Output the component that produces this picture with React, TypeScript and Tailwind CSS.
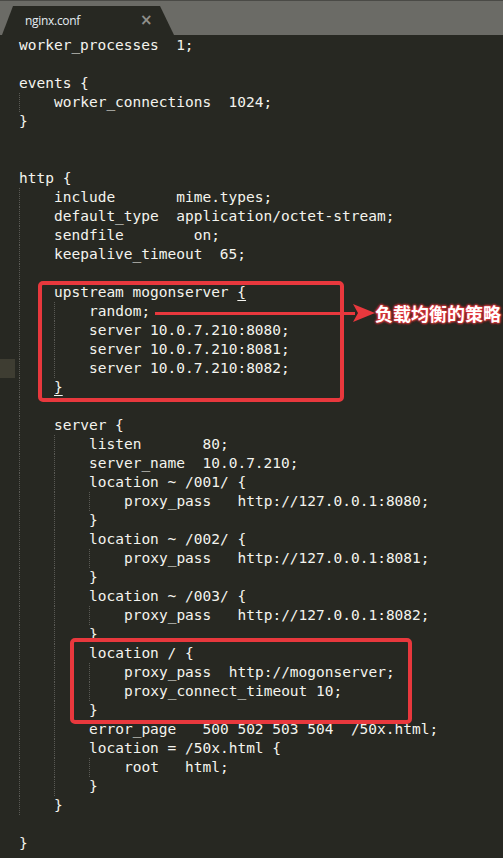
const lines: [number, string][] = [
  [0, "worker_processes  1;"],
  [0, ""],
  [0, "events {"],
  [1, "worker_connections  1024;"],
  [0, "}"],
  [0, ""],
  [0, ""],
  [0, "http {"],
  [1, "include       mime.types;"],
  [1, "default_type  application/octet-stream;"],
  [1, "sendfile        on;"],
  [1, "keepalive_timeout  65;"],
  [1, ""],
  [1, "upstream mogonserver {"],
  [2, "random;"],
  [2, "server 10.0.7.210:8080;"],
  [2, "server 10.0.7.210:8081;"],
  [2, "server 10.0.7.210:8082;"],
  [1, "}"],
  [1, ""],
  [1, "server {"],
  [2, "listen       80;"],
  [2, "server_name  10.0.7.210;"],
  [2, "location ~ /001/ {"],
  [3, "proxy_pass   http://127.0.0.1:8080;"],
  [2, "}"],
  [2, "location ~ /002/ {"],
  [3, "proxy_pass   http://127.0.0.1:8081;"],
  [2, "}"],
  [2, "location ~ /003/ {"],
  [3, "proxy_pass   http://127.0.0.1:8082;"],
  [2, "}"],
  [2, "location / {"],
  [3, "proxy_pass  http://mogonserver;"],
  [3, "proxy_connect_timeout 10;"],
  [2, "}"],
  [2, "error_page   500 502 503 504  /50x.html;"],
  [2, "location = /50x.html {"],
  [3, "root   html;"],
  [2, "}"],
  [1, "}"],
  [0, ""],
  [0, "}"],
];

const CodeLine = ({ level, text, idx }: { level: number; text: string; idx: number }) => {
  const guides = Array.from({ length: level });
  const isBrace = idx === 13 || idx === 18;
  return (
    <div className="flex h-[19px] items-stretch">
      <div className={`w-[15px] shrink-0 ${idx === 17 ? "bg-[#3e3d32]" : ""}`} />
      <div className="w-[4px] shrink-0" />
      {guides.map((_, i) => (
        <div key={i} className="w-[35px] shrink-0 border-l border-dotted border-[#5a5a55]" />
      ))}
      <span className="whitespace-pre leading-[19px]">
        {isBrace ? (
          <>
            {text.slice(0, -1)}
            <span className="underline underline-offset-[3px]">{text.slice(-1)}</span>
          </>
        ) : (
          text
        )}
      </span>
    </div>
  );
};

export default function App() {
  return (
    <div className="relative min-h-screen w-[503px] overflow-hidden bg-[#272822]">
      {/* tab bar */}
      <div className="h-[35px] border-t border-[#4a4a46] bg-[#6b6b66] pt-[5px]">
        <div className="ml-[2px] flex h-[29px] w-[172px] items-center bg-[#272822] pl-[23px] [clip-path:polygon(11px_0,158px_0,100%_100%,0_100%)]">
          <span className="font-['Open_Sans',sans-serif] text-[12px] tracking-[-0.3px] text-[#e4ecf2]">nginx.conf</span>
          <span className="ml-[60px] font-['DejaVu_Sans',sans-serif] text-[15px] font-bold leading-none text-[#8f8f8a]">×</span>
        </div>
      </div>

      {/* code */}
      <div className="pt-[1px] font-['DejaVu_Sans_Mono',monospace] text-[14.5px] text-[#f4f4ee]">
        {lines.map(([lvl, t], i) => (
          <CodeLine key={i} level={lvl} text={t} idx={i} />
        ))}
      </div>

      {/* annotations */}
      <div className="absolute left-[38px] top-[281px] h-[121px] w-[306px] rounded-[5px] border-[4px] border-[#e8383d]" />
      <div className="absolute left-[70px] top-[638px] h-[86px] w-[342px] rounded-[5px] border-[4px] border-[#e8383d]" />

      <div className="absolute left-[155px] top-[304px] flex items-center">
        <div className="h-[3px] w-[200px] bg-[#e8383d]" />
        <svg width="22" height="18" viewBox="0 0 22 18" className="-ml-[2px]">
          <path d="M0 0 L22 9 L0 18 L5 9 Z" fill="#e8383d" />
        </svg>
        <span className="font-['Noto_Sans_CJK_SC',sans-serif] text-[18px] font-bold leading-none text-white [text-shadow:0_0_2px_#e8383d,0_0_2px_#e8383d,0_0_3px_#e8383d,0_0_3px_#e8383d]">
          负载均衡的策略
        </span>
      </div>
    </div>
  );
}
